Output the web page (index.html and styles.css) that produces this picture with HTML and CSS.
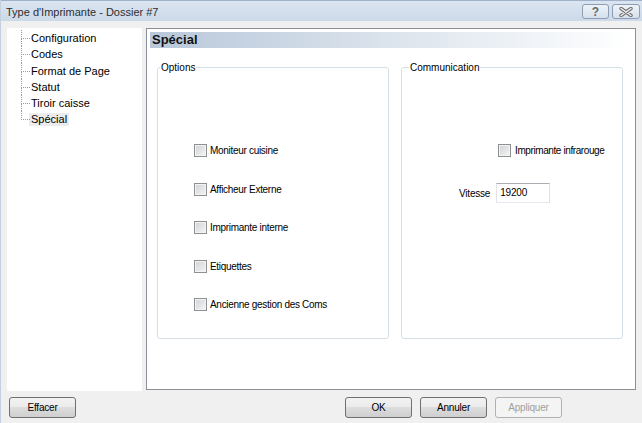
FILE: index.html
```html
<!DOCTYPE html>
<html lang="fr">
<head>
  <meta charset="UTF-8">
  <meta name="viewport" content="width=device-width, initial-scale=1.0">
  <title>Type d'Imprimante - Dossier #7</title>
  <link rel="stylesheet" href="styles.css">
</head>
<body>
  <div class="window">
    <div class="titlebar">
      <span class="title">Type d'Imprimante - Dossier #7</span>
      <div class="caption-buttons">
        <span class="cap-btn help">?</span>
        <span class="cap-btn close">
          <svg width="14" height="10" viewBox="0 0 14 10">
            <path d="M2 1.5 L12 8.5 M12 1.5 L2 8.5" stroke="#707070" stroke-width="3.4" stroke-linecap="round" fill="none"/>
            <path d="M2 1.5 L12 8.5 M12 1.5 L2 8.5" stroke="#f4f4f4" stroke-width="1.4" stroke-linecap="round" fill="none"/>
          </svg>
        </span>
      </div>
    </div>

    <div class="main">
      <ul class="tree">
        <li>Configuration</li>
        <li>Codes</li>
        <li>Format de Page</li>
        <li>Statut</li>
        <li>Tiroir caisse</li>
        <li class="last"><span class="selected">Spécial</span></li>
      </ul>

      <div class="page">
        <div class="page-header">Spécial</div>
        <div class="groups">
          <fieldset class="group group-options">
            <legend>Options</legend>
            <div class="options-list">
              <label class="check"><span class="box"></span>Moniteur cuisine</label>
              <label class="check"><span class="box"></span>Afficheur Externe</label>
              <label class="check"><span class="box"></span>Imprimante interne</label>
              <label class="check"><span class="box"></span>Etiquettes</label>
              <label class="check"><span class="box"></span>Ancienne gestion des Coms</label>
            </div>
          </fieldset>
          <fieldset class="group group-comm">
            <legend>Communication</legend>
            <div class="comm-body">
              <label class="check infra"><span class="box"></span>Imprimante infrarouge</label>
              <div class="speed-row">
                <span>Vitesse</span>
                <div class="textbox">19200</div>
              </div>
            </div>
          </fieldset>
        </div>
      </div>
    </div>

    <div class="footer">
      <button class="btn">Effacer</button>
      <div class="footer-right">
        <button class="btn">OK</button>
        <button class="btn">Annuler</button>
        <button class="btn disabled">Appliquer</button>
      </div>
    </div>
  </div>
</body>
</html>
```

FILE: styles.css
```css
body {
  margin: 0;
  padding: 0;
  font-family: "Liberation Sans", Arial, sans-serif;
  background: #f0f0f0;
}

.window {
  width: 642px;
  height: 423px;
  background: #f0f0f0;
  box-sizing: border-box;
  border-left: 1px solid #c3d0de;
  overflow: hidden;
}

/* Title bar */
.titlebar {
  height: 21px;
  display: flex;
  align-items: center;
  justify-content: space-between;
  background: linear-gradient(#dbe5f1, #cbd9e9);
  border-top: 1px solid #9fb2c9;
  box-sizing: border-box;
  padding-left: 5px;
  padding-right: 2px;
}

.title {
  font-size: 11px;
  color: #2e2e2e;
  margin-top: 2px;
}

.caption-buttons {
  display: flex;
  gap: 3px;
  margin-top: 1px;
}

.cap-btn {
  width: 27px;
  height: 15px;
  box-sizing: border-box;
  border: 1px solid #8e9db1;
  border-radius: 3px;
  background: linear-gradient(#eef3f9, #d6e0ec);
  display: flex;
  align-items: center;
  justify-content: center;
  color: #6a6a6a;
  font-size: 12px;
  font-weight: bold;
  line-height: 1;
}

.cap-btn.close {
  width: 28px;
}

/* Main area */
.main {
  display: flex;
  align-items: flex-start;
  gap: 4px;
  padding: 7px 6px 0 6px;
}

.tree {
  list-style: none;
  margin: 0;
  padding: 2px 0 0 24px;
  width: 135px;
  height: 363px;
  box-sizing: border-box;
  background: #ffffff;
  font-size: 11px;
  line-height: 16.3px;
  color: #000;
}

.tree li {
  position: relative;
}

.tree li::before {
  content: "";
  position: absolute;
  left: -10px;
  top: 0;
  width: 8px;
  height: 8px;
  border-left: 1px dotted #9a9a9a;
  border-bottom: 1px dotted #9a9a9a;
}

.tree li::after {
  content: "";
  position: absolute;
  left: -10px;
  top: 8px;
  bottom: 0;
  border-left: 1px dotted #9a9a9a;
}

.tree li.last::after {
  display: none;
}

.tree .selected {
  display: inline-block;
  margin-left: -2px;
  padding: 0 2px;
  line-height: 13px;
  background: #ececec;
}

/* Property page */
.page {
  width: 490px;
  height: 362px;
  box-sizing: border-box;
  border: 1px solid #8c9096;
  background: #ffffff;
  padding: 3px;
}

.page-header {
  height: 16px;
  line-height: 16px;
  padding-left: 2px;
  font-size: 13px;
  font-weight: bold;
  color: #111;
  background: linear-gradient(to right, #b8c8da, #ffffff);
}

.groups {
  display: flex;
  gap: 12px;
  margin-top: 13px;
  padding-left: 7px;
  height: 278px;
}

.group {
  margin: 0;
  padding: 0;
  min-width: 0;
  box-sizing: border-box;
  border: 1px solid #d5dfe5;
  border-radius: 3px;
}

.group legend {
  font-size: 10px;
  line-height: 13px;
  padding: 0 1px;
  color: #000;
}

.group-options {
  width: 232px;
}

.group-options legend {
  margin-left: 2px;
}

.group-comm {
  width: 222px;
}

.group-comm legend {
  margin-left: 7px;
}

.options-list {
  display: flex;
  flex-direction: column;
  gap: 25.5px;
  padding: 70px 0 0 36px;
}

.check {
  display: flex;
  align-items: center;
  gap: 3px;
  height: 13px;
  font-size: 10px;
  letter-spacing: -0.3px;
  color: #000;
}

.box {
  width: 13px;
  height: 13px;
  box-sizing: border-box;
  border: 1px solid #8e8f8f;
  background: linear-gradient(135deg, #cfd2d7, #f5f5f5);
  box-shadow: inset 0 0 0 1px #f4f4f4;
  flex: none;
}

.comm-body {
  padding-top: 70px;
}

.check.infra {
  padding-left: 96px;
  gap: 4px;
  letter-spacing: -0.4px;
}

.speed-row {
  display: flex;
  align-items: center;
  gap: 6px;
  margin-top: 26px;
  padding-left: 57px;
  font-size: 10px;
  letter-spacing: -0.2px;
}

.textbox {
  width: 54px;
  height: 20px;
  box-sizing: border-box;
  border: 1px solid;
  border-color: #abadb3 #dbdfe6 #e3e9ef #e2e3ea;
  padding-left: 3px;
  line-height: 18px;
  font-size: 10px;
  background: #fff;
}

/* Footer buttons */
.footer {
  display: flex;
  justify-content: space-between;
  padding: 6px 80px 0 8px;
}

.footer-right {
  display: flex;
  gap: 8px;
}

.btn {
  width: 67px;
  height: 21px;
  padding: 0;
  font-family: "Liberation Sans", Arial, sans-serif;
  font-size: 10px;
  letter-spacing: -0.2px;
  color: #000;
  border: 1px solid #707070;
  border-radius: 3px;
  background: linear-gradient(#f2f2f2 0%, #ebebeb 49%, #dddddd 50%, #cfcfcf 100%);
}

.btn.disabled {
  color: #a0a0a0;
  border-color: #adb2b5;
  background: #f4f4f4;
}
```
